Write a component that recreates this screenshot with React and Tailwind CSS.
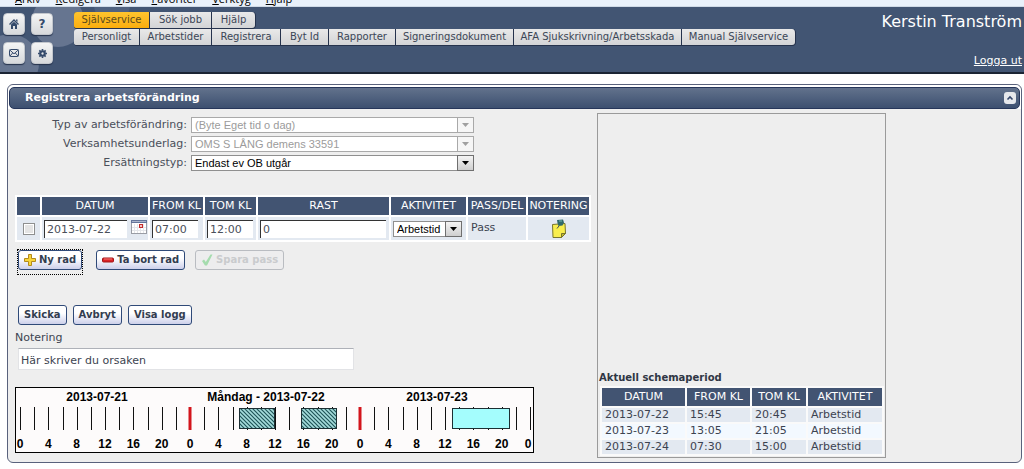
import { useState } from 'react';

const browserMenu = ['Arkiv', 'Redigera', 'Visa', 'Favoriter', 'Verktyg', 'Hjälp'];

const mainTabs = [
  { label: 'Självservice', width: 'w-[75px]', active: true },
  { label: 'Sök jobb', width: 'w-[61px]' },
  { label: 'Hjälp', width: 'w-[43px]' },
];

const subTabs = [
  { label: 'Personligt', width: 'w-[65px]' },
  { label: 'Arbetstider', width: 'w-[71px]' },
  { label: 'Registrera', width: 'w-[68px]' },
  { label: 'Byt Id', width: 'w-[47px]' },
  { label: 'Rapporter', width: 'w-[66px]' },
  { label: 'Signeringsdokument', width: 'w-[117px]' },
  { label: 'AFA Sjukskrivning/Arbetsskada', width: 'w-[167px]' },
  { label: 'Manual Självservice', width: 'w-[113px]' },
];

const schedule = [
  { date: '2013-07-22', from: '15:45', to: '20:45', activity: 'Arbetstid' },
  { date: '2013-07-23', from: '13:05', to: '21:05', activity: 'Arbetstid' },
  { date: '2013-07-24', from: '07:30', to: '15:00', activity: 'Arbetstid' },
];

// hours counted from midnight 2013-07-21
const shifts = [
  { start: 31, end: 36, hatched: true },
  { start: 39.75, end: 44.75, hatched: true },
  { start: 61, end: 69, hatched: false },
];

function TabRow({ tabs, label }) {
  return (
    <nav aria-label={label} className="flex w-fit gap-px overflow-hidden rounded-r-[4px] rounded-l-[3px] bg-[#26334d] border-b border-r border-[#26334d]">
      {tabs.map(t => (
        <a
          key={t.label}
          href="#"
          className={`${t.width} h-4 text-center text-[10px] leading-4 whitespace-nowrap ${
            t.active
              ? 'bg-linear-to-b from-[#ffc42c] to-[#fbae0c] text-[#5b4a1c]'
              : 'bg-linear-to-b from-[#e9e9e9] to-[#d3d4d6] text-[#3b4656]'
          }`}
        >
          {t.label}
        </a>
      ))}
    </nav>
  );
}

function ToolButton({ label, children }) {
  return (
    <button
      type="button"
      aria-label={label}
      className="flex size-[22px] items-center justify-center rounded-[4px] border border-[#c3c7cd] bg-linear-to-b from-[#f4f5f5] to-[#d7d9dc] text-[#344a6b] shadow-[0_1px_1px_#26334d]"
    >
      {children}
    </button>
  );
}

function Arrow() {
  return (
    <svg viewBox="0 0 7 4" className="h-1 w-[7px]" fill="currentColor">
      <path d="M0 0h7L3.5 4z" />
    </svg>
  );
}

function DropDown({ id, label, options, disabled, className }) {
  return (
    <div className={`relative ${className}`}>
      <select
        id={id}
        aria-label={label}
        disabled={disabled}
        className={`block h-4 w-full appearance-none border bg-white pl-[3px] font-['Liberation_Sans',sans-serif] text-[11px] leading-[14px] opacity-100 ${
          disabled ? 'border-[#a9a9a9] text-[#9b9b9b]' : 'border-[#8f8f8f] text-black'
        }`}
      >
        {options.map(o => <option key={o}>{o}</option>)}
      </select>
      <span
        className={`pointer-events-none absolute top-0 right-0 flex h-4 w-[17px] items-center justify-center border ${
          disabled
            ? 'border-[#a9a9a9] bg-[#f6f6f6] text-[#a0a0a0]'
            : 'border-[#6f6f6f] bg-linear-to-b from-[#f4f4f4] to-[#cfcfcf] text-black'
        }`}
      >
        <Arrow />
      </span>
    </div>
  );
}

function FormRow({ id, label, option, disabled }) {
  return (
    <div className="flex items-center gap-1">
      <label htmlFor={id} className="w-[172px] text-right text-[11px] leading-4 text-[#4a4f5a]">
        {label}
      </label>
      <DropDown id={id} options={[option]} disabled={disabled} className="w-[283px]" />
    </div>
  );
}

function ActionButton({ children, disabled, onClick }) {
  return (
    <button
      type="button"
      disabled={disabled}
      onClick={onClick}
      className={`flex h-5 items-center gap-[3px] rounded-[3px] border px-[5px] text-[10px] font-bold leading-4 whitespace-nowrap ${
        disabled
          ? 'border-[#b9bcc1] bg-[#ededee] text-[#c9cbcd]'
          : 'border-[#2f4a78] bg-linear-to-b from-white from-40% to-[#cdd0ea] text-[#333d50]'
      }`}
    >
      {children}
    </button>
  );
}

function TextField({ label, value, className }) {
  return (
    <input
      type="text"
      aria-label={label}
      defaultValue={value}
      className={`block h-[18px] border-t border-l border-[#333] bg-white pl-[2px] text-[11px] text-[#4a4f5a] ${className}`}
    />
  );
}

function Timeline() {
  const hour = 170 / 24;
  const x = h => 5 + h * hour;
  const ticks = Array.from({ length: 37 }, (_, i) => i * 2);

  return (
    <svg
      role="img"
      aria-label="Schema 2013-07-21 till 2013-07-23"
      viewBox="0 0 519 66"
      className="h-[66px] w-[519px] font-['Liberation_Sans',sans-serif] text-[12px] font-bold"
    >
      <defs>
        <pattern id="hatch" width="4" height="4" patternUnits="userSpaceOnUse">
          <rect width="4" height="4" fill="#a5dcdb" />
          <path d="M-1 -1L5 5M-1 3L1 5M3 -1L5 1" stroke="#1f5558" strokeWidth="1.2" />
        </pattern>
      </defs>
      <rect x="0.5" y="0.5" width="518" height="65" fill="#fdfbfb" stroke="#000" />
      {ticks.map(h => {
        const midnight = h === 24 || h === 48;
        return (
          <line
            key={h}
            x1={Math.round(x(h)) + (midnight ? 0 : 0.5)}
            x2={Math.round(x(h)) + (midnight ? 0 : 0.5)}
            y1="20"
            y2="43"
            stroke={midnight ? '#d3151c' : '#111'}
            strokeWidth={midnight ? 3 : 1}
          />
        );
      })}
      {shifts.map(s => (
        <rect
          key={s.start}
          x={Math.floor(x(s.start)) + 0.5}
          y="21.5"
          width={Math.round((s.end - s.start) * hour)}
          height="20"
          fill={s.hatched ? 'url(#hatch)' : '#a4fdfd'}
          stroke="#1c2f33"
        />
      ))}
      {ticks.filter(h => h % 4 === 0).map(h => (
        <text key={h} x={h === 72 ? 513 : x(h)} y="61" textAnchor="middle">{h % 24}</text>
      ))}
      <text x="82" y="14" textAnchor="middle">2013-07-21</text>
      <text x="251" y="14" textAnchor="middle">Måndag - 2013-07-22</text>
      <text x="422" y="14" textAnchor="middle">2013-07-23</text>
    </svg>
  );
}

function NoteIcon() {
  return (
    <svg viewBox="0 0 16 20" className="h-5 w-4">
      <path d="M1.5 5.5L14 4.5L14.5 14.5L10.5 18.5L2 18.5Z" fill="#f8ee4e" stroke="#77752d" />
      <path d="M14.5 14.5L10.5 14.5V18.5Z" fill="#c2b92f" stroke="#77752d" />
      <path d="M6 1L12 0.5L13 3.5L11.5 6.5L7.5 7L6.5 4Z" fill="#2f6a6c" />
      <path d="M8 7L6 9.5" stroke="#445" />
      <path d="M8 2H11" stroke="#74b5b0" />
    </svg>
  );
}

function CalendarIcon() {
  return (
    <svg viewBox="0 0 16 14" className="h-[14px] w-4">
      <rect x="0.5" y="0.5" width="15" height="13" fill="#fff" stroke="#9a9da5" />
      <path d="M0 0H16V3H0Z" fill="#65769b" />
      <path d="M1 1H15V2H1Z" fill="#aab5cc" />
      <path d="M3.5 4V13M6.5 4V13M9.5 4V13M12.5 4V13M1 7.5H15M1 10.5H15" stroke="#e4e6ea" />
      <rect x="8" y="4" width="4" height="4" fill="#c32c2c" />
      <rect x="9" y="5" width="2" height="2" fill="#f3c8c8" />
    </svg>
  );
}

const headCell = 'bg-[#425472] text-center font-normal text-white';

export default function App() {
  const [note, setNote] = useState('Här skriver du orsaken');

  return (
    <div className="bg-white font-['DejaVu_Sans',Verdana,sans-serif] text-[11px] text-[#3c4350]">
      <div className="flex h-[7px] items-end gap-[15px] overflow-hidden border-b border-[#cfdae6] bg-[#e9f1fa] pl-[15px] font-['Open_Sans',sans-serif] text-[11px] leading-[14px] text-black">
        {browserMenu.map(item => (
          <span key={item} className="underline-offset-1 first-letter:underline">{item}</span>
        ))}
      </div>

      <header className="relative flex min-h-[67px] items-start justify-between border-b-2 border-[#1b2434] bg-[#425573]">
        <svg viewBox="0 0 160 65" className="absolute top-0 left-0 h-[65px] w-40">
          <circle cx="58" cy="14" r="26" fill="#667590" />
          <circle cx="10" cy="56" r="29" fill="#667590" />
          <circle cx="112" cy="-2" r="18" fill="#506280" />
        </svg>
        <div className="relative flex">
          <div className="grid grid-cols-2 gap-x-[6px] gap-y-[7px] pt-[6px] pr-[21px] pl-[3px]">
            <ToolButton label="Hem">
              <svg viewBox="0 0 10 10" className="size-[10px]" fill="currentColor">
                <path d="M5 0L10 5L9 6L5 2L1 6L0 5ZM2 5.5L5 2.8L8 5.5V10H6V7H4V10H2ZM7 0.5H8.5V3L7 1.6Z" />
              </svg>
            </ToolButton>
            <ToolButton label="Hjälp">
              <span className="text-[12px] leading-4 font-bold">?</span>
            </ToolButton>
            <ToolButton label="Meddelanden">
              <svg viewBox="0 0 10 8" className="h-2 w-[10px]" fill="none" stroke="currentColor">
                <rect x="0.5" y="0.5" width="9" height="7" rx="1" />
                <path d="M0.8 1L5 4.8L9.2 1M1 7L3.6 4M9 7L6.4 4" />
              </svg>
            </ToolButton>
            <ToolButton label="Inställningar">
              <svg viewBox="0 0 10 10" className="size-[9px]" fill="none" stroke="currentColor">
                <circle cx="5" cy="5" r="2.5" strokeWidth="2.4" />
                <path d="M5 0V2M5 8V10M0 5H2M8 5H10M1.5 1.5L3 3M7 7L8.5 8.5M8.5 1.5L7 3M3 7L1.5 8.5" strokeWidth="1.8" />
              </svg>
            </ToolButton>
          </div>
          <div className="pt-[5px]">
            <TabRow tabs={mainTabs} label="Huvudmeny" />
            <TabRow tabs={subTabs} label="Undermeny" />
          </div>
        </div>
        <div className="flex flex-col items-end gap-5 pt-1 pr-[2px] text-white">
          <span className="text-[16px] leading-[22px]">Kerstin Tranström</span>
          <a href="#" className="leading-4 underline">Logga ut</a>
        </div>
      </header>

      <main className="pt-[10px] pr-[2px] pb-[6px] pl-[7px]">
        <section className="rounded-[6px] border border-[#59627c] bg-[#eeeeee]">
          <div className="rounded-t-[6px] bg-white px-px pt-[2px]">
            <div className="flex h-[22px] items-center justify-between rounded-[5px] border border-[#26365a] bg-linear-to-b from-[#62728c] to-[#3d5070] pr-[3px] pl-[15px]">
              <h1 className="text-[11px] leading-4 font-bold text-white">Registrera arbetsförändring</h1>
              <button
                type="button"
                aria-label="Fäll ihop"
                className="flex size-3 items-center justify-center rounded-[3px] bg-[#e6e8ec] text-[#33456a]"
              >
                <svg viewBox="0 0 8 6" className="h-[6px] w-2" fill="none" stroke="currentColor" strokeWidth="1.6">
                  <path d="M1.5 4.5L4 2L6.5 4.5" />
                </svg>
              </button>
            </div>
          </div>

          <div className="flex items-stretch pt-1 pb-1 pl-[7px]">
            <div className="w-[582px] shrink-0 pt-1 pb-[5px]">
              <div className="flex flex-col gap-[3px]">
                <FormRow id="typ" label="Typ av arbetsförändring:" option="(Byte Eget tid o dag)" disabled />
                <FormRow id="underlag" label="Verksamhetsunderlag:" option="OMS S LÅNG demens 33591" disabled />
                <FormRow id="ersattning" label="Ersättningstyp:" option="Endast ev OB utgår" />
              </div>

              <table className="mt-6 w-[576px] table-fixed border-separate border-spacing-[2px] bg-white">
                <colgroup>
                  <col className="w-[23px]" />
                  <col className="w-[106px]" />
                  <col className="w-[53px]" />
                  <col className="w-[51px]" />
                  <col />
                  <col className="w-[75px]" />
                  <col className="w-[58px]" />
                  <col className="w-[61px]" />
                </colgroup>
                <thead>
                  <tr className="h-[18px] leading-4">
                    <th className={headCell}></th>
                    <th className={headCell}>DATUM</th>
                    <th className={headCell}>FROM KL</th>
                    <th className={headCell}>TOM KL</th>
                    <th className={headCell}>RAST</th>
                    <th className={headCell}>AKTIVITET</th>
                    <th className={headCell}>PASS/DEL</th>
                    <th className={headCell}>NOTERING</th>
                  </tr>
                </thead>
                <tbody>
                  <tr className="h-[23px] bg-[#e3e9f1]">
                    <td>
                      <input
                        type="checkbox"
                        aria-label="Välj rad"
                        className="mx-auto block size-3 appearance-none border border-[#8e8f8f] bg-[#e4e4e4] shadow-[inset_0_0_0_1px_#fff]"
                      />
                    </td>
                    <td>
                      <div className="flex items-start gap-1 pl-[2px]">
                        <TextField label="Datum" value="2013-07-22" className="w-[83px]" />
                        <button type="button" aria-label="Öppna kalender"><CalendarIcon /></button>
                      </div>
                    </td>
                    <td className="pl-[2px]"><TextField label="Från klockan" value="07:00" className="w-[46px]" /></td>
                    <td className="pl-[2px]"><TextField label="Till klockan" value="12:00" className="w-[46px]" /></td>
                    <td className="pl-[2px]"><TextField label="Rast" value="0" className="w-[126px]" /></td>
                    <td className="pl-[2px]">
                      <DropDown label="Aktivitet" options={['Arbetstid']} className="w-[69px]" />
                    </td>
                    <td className="pl-[3px]">Pass</td>
                    <td>
                      <button type="button" aria-label="Öppna notering" className="mx-auto block"><NoteIcon /></button>
                    </td>
                  </tr>
                </tbody>
              </table>

              <div className="mt-2 flex items-start gap-[10px] pl-[3px]">
                <div className="mr-1 pb-1 outline outline-dotted outline-black">
                  <ActionButton>
                    <svg viewBox="0 0 12 12" className="size-3">
                      <path d="M4.5 0.5H7.5V4.5H11.5V7.5H7.5V11.5H4.5V7.5H0.5V4.5H4.5Z" fill="#f8d53a" stroke="#b38a1b" />
                    </svg>
                    Ny rad
                  </ActionButton>
                </div>
                <ActionButton>
                  <svg viewBox="0 0 12 12" className="size-3">
                    <rect x="0.5" y="4" width="11" height="4" rx="1" fill="#dc2427" stroke="#a01518" />
                    <path d="M2 5H10" stroke="#f47a76" />
                  </svg>
                  Ta bort rad
                </ActionButton>
                <ActionButton disabled>
                  <svg viewBox="0 0 12 12" className="size-3">
                    <path d="M1 7L3 5.5L4.8 8L9.5 0.5H11.5L6 11.5H4Z" fill="#a5dcae" />
                  </svg>
                  Spara pass
                </ActionButton>
              </div>

              <div className="mt-[31px] flex gap-[6px] pl-[3px]">
                <ActionButton>Skicka</ActionButton>
                <ActionButton>Avbryt</ActionButton>
                <ActionButton>Visa logg</ActionButton>
              </div>

              <label htmlFor="notering" className="mt-[5px] block leading-4">Notering</label>
              <input
                id="notering"
                type="text"
                value={note}
                onChange={e => setNote(e.target.value)}
                className="mt-[2px] ml-[3px] block h-[22px] w-[336px] border border-[#e2e3e6] border-t-[#aeb1b8] bg-white pt-[2px] pl-[2px] text-[11px]"
              />

              <div className="mt-[17px] flex">
                <Timeline />
              </div>
            </div>

            <aside className="flex w-[289px] shrink-0 flex-col justify-end border border-[#9a9a9a] p-px">
              <h2 className="text-[10px] leading-4 font-bold text-[#2f3644]">Aktuell schemaperiod</h2>
              <table className="mx-[1px] w-[284px] table-fixed border-separate border-spacing-[2px] bg-[#fafafa]">
                <colgroup>
                  <col className="w-[83px]" />
                  <col className="w-[63px]" />
                  <col className="w-[54px]" />
                  <col />
                </colgroup>
                <thead>
                  <tr className="h-[18px] leading-4">
                    <th className={headCell}>DATUM</th>
                    <th className={headCell}>FROM KL</th>
                    <th className={headCell}>TOM KL</th>
                    <th className={headCell}>AKTIVITET</th>
                  </tr>
                </thead>
                <tbody>
                  {schedule.map(row => (
                    <tr key={row.date} className="h-[14px] leading-[14px] odd:bg-[#e3e9f1] even:bg-[#f3f9ff]">
                      <td className="pl-[3px]">{row.date}</td>
                      <td className="pl-[3px]">{row.from}</td>
                      <td className="pl-[3px]">{row.to}</td>
                      <td className="pl-[3px]">{row.activity}</td>
                    </tr>
                  ))}
                </tbody>
              </table>
            </aside>
          </div>
        </section>
      </main>
    </div>
  );
}
